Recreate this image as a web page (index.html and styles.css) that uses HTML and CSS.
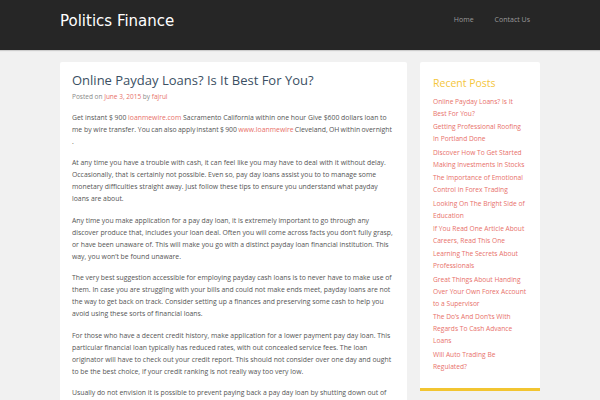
FILE: index.html
```html
<!DOCTYPE html>
<html>
<head>
<meta charset="utf-8">
<link rel="stylesheet" href="styles.css">
</head>
<body>
<header class="site-header">
  <div class="wrap header-inner">
    <div class="site-title">Politics Finance</div>
    <nav class="nav">
      <a href="#">Home</a>
      <a href="#">Contact Us</a>
    </nav>
  </div>
</header>
<div class="wrap content">
  <main class="post">
    <h1 class="post-title">Online Payday Loans? Is It Best For You?</h1>
    <div class="meta">Posted on <a href="#">June 3, 2015</a> by <a href="#">fajrul</a></div>
    <p>Get instant $ 900 <a href="#">loanmewire.com</a> Sacramento California within one hour Give $600 dollars loan to me by wire transfer. <span class="tight">You can also apply instant $ 900 <a href="#">www.loanmewire</a> Cleveland, OH within overnight</span> .</p>
    <p>At any time you have a trouble with cash, it can feel like you may have to deal with it without delay. Occasionally, that is certainly not possible. Even so, pay day loans assist you to to manage some monetary difficulties straight away. Just follow these tips to ensure you understand what payday loans are about.</p>
    <p>Any time you make application for a pay day loan, it is extremely important to go through any discover produce that, includes your loan deal. Often you will come across facts you don’t fully grasp, or have been unaware of. This will make you go with a distinct payday loan financial institution. This way, you won’t be found unaware.</p>
    <p>The very best suggestion accessible for employing payday cash loans is to never have to make use of them. In case you are struggling with your bills and could not make ends meet, payday loans are not the way to get back on track. Consider setting up a finances and preserving some cash to help you avoid using these sorts of financial loans.</p>
    <p>For those who have a decent credit history, make application for a lower payment pay day loan. This particular financial loan typically has reduced rates, with out concealed service fees. The loan originator will have to check out your credit report. This should not consider over one day and ought to be the best choice, if your credit ranking is not really way too very low.</p>
    <p>Usually do not envision it is possible to prevent paying back a pay day loan by shutting down out of your bank account. This will only bring about you much more problems in the future.</p>
  </main>
  <aside class="sidebar">
    <div class="widget">
      <h2 class="widget-title">Recent Posts</h2>
      <ul class="posts">
        <li><a href="#">Online Payday Loans? Is It Best For You?</a></li>
        <li><a href="#">Getting Professional Roofing In Portland Done</a></li>
        <li><a href="#">Discover How To Get Started Making Investments In Stocks</a></li>
        <li><a href="#">The Importance of Emotional Control in Forex Trading</a></li>
        <li><a href="#">Looking On The Bright Side of Education</a></li>
        <li><a href="#">If You Read One Article About Careers, Read This One</a></li>
        <li><a href="#">Learning The Secrets About Professionals</a></li>
        <li><a href="#">Great Things About Handing Over Your Own Forex Account to a Supervisor</a></li>
        <li><a href="#">The Do’s And Don’ts With Regards To Cash Advance Loans</a></li>
        <li><a href="#">Will Auto Trading Be Regulated?</a></li>
      </ul>
    </div>
  </aside>
</div>
</body>
</html>
```
FILE: styles.css
```css
html, body {
  margin: 0;
  padding: 0;
}
body {
  background: #f1f1f1;
  font-family: "Open Sans", "DejaVu Sans", sans-serif;
  color: #555;
  height: 400px;
  overflow: hidden;
}
a {
  color: #e8706a;
  text-decoration: none;
}
.wrap {
  width: 480px;
  margin: 0 auto;
}
.site-header {
  background: #262626;
  height: 50px;
  box-shadow: 0 1px 1px rgba(0,0,0,0.15);
}
.header-inner {
  display: flex;
  justify-content: space-between;
  align-items: flex-start;
  height: 50px;
}
.site-title {
  font-family: "DejaVu Sans", sans-serif;
  font-size: 15px;
  color: #fff;
  padding-top: 12px;
  line-height: 18px;
}
.nav {
  display: flex;
  gap: 21px;
  padding-top: 15px;
  padding-right: 10px;
}
.nav a {
  color: #9a9a9a;
  font-size: 7px;
  line-height: 10px;
}
.content {
  display: flex;
  align-items: flex-start;
  gap: 13px;
  padding-top: 12px;
}
.post {
  width: 323px;
  flex: none;
  background: #fff;
  padding: 10px 12px 20px;
  border-radius: 2px;
}
.post-title {
  font-family: "Open Sans", sans-serif;
  font-weight: 400;
  font-size: 13px;
  line-height: 16px;
  color: #3b4f63;
  margin: 0;
}
.meta {
  font-size: 6.5px;
  color: #888;
  margin-top: 4px;
  line-height: 10px;
}
.post p {
  font-size: 6.85px;
  line-height: 12px;
  margin: 0 0 9.4px;
}
.tight {
  word-spacing: -0.5px;
}
.meta + p {
  margin-top: 10px;
}
.sidebar {
  width: 120px;
  flex: none;
}
.widget {
  background: #fff;
  padding: 14px 13px 14px;
  border-bottom: 3px solid #f2c531;
  border-radius: 2px 2px 0 0;
}
.widget-title {
  font-weight: 400;
  font-size: 10.5px;
  line-height: 14px;
  color: #f5c63c;
  margin: 0 0 6px;
}
.posts {
  list-style: none;
  margin: 0;
  padding: 0;
}
.posts li {
  font-size: 6.65px;
  line-height: 12px;
  margin-bottom: 1.4px;
}
```
